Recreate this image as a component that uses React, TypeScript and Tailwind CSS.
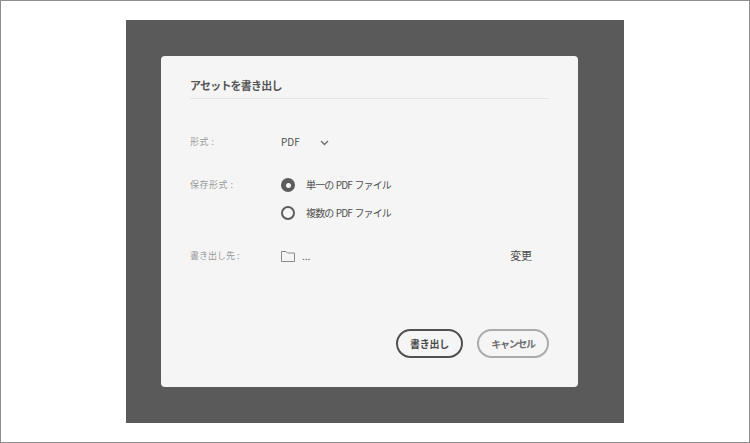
import React from "react";

function Radio({ on, label }: { on?: boolean; label: string }) {
  return (
    <div className="flex h-[14px] items-center">
      <span className={on ? "flex h-[14px] w-[14px] items-center justify-center rounded-full bg-[#5c5c5c]" : "h-[14px] w-[14px] rounded-full border-2 border-[#5c5c5c]"}>
        {on && <span className="h-[5px] w-[5px] rounded-full bg-[#f5f5f5]" />}
      </span>
      <span className="ml-[11px] text-[10px] leading-[14px] tracking-[-0.85px] text-[#505050] [word-spacing:1px]">{label}</span>
    </div>
  );
}

export default function App() {
  return (
    <div className="flex h-[443px] w-[750px] items-start justify-center border border-[#8e8e8e] bg-white pt-[19px] font-['Noto_Sans_CJK_JP','Noto_Sans',sans-serif]">
      <div className="flex h-[403px] w-[498px] items-start justify-start bg-[#5a5a5a] pl-[35px] pt-[36px]">
        <div className="flex h-[331px] w-[417px] flex-col rounded-[4px] bg-[#f5f5f5] pl-[29px] pr-[29px]">
          <div className="h-[43px] border-b border-[#e4e4e4] pt-[20px] text-[11px] font-bold leading-[18px] tracking-[-0.8px] text-[#555555]">アセットを書き出し</div>

          <div className="mt-[35px] flex h-[16px] items-center">
            <span className="w-[91px] text-[9px] leading-[16px] tracking-[0.5px] text-[#9a9a9a]">形式 :</span>
            <span className="text-[10px] leading-[16px] text-[#505050]">PDF</span>
            <svg className="ml-[20px] mt-[1px]" width="9" height="6" viewBox="0 0 9 6" fill="none" stroke="#707070" strokeWidth="1.4"><path d="M1 1l3.5 3.5L8 1" /></svg>
          </div>

          <div className="mt-[28px] flex">
            <span className="w-[91px] text-[9px] leading-[14px] tracking-[0.5px] text-[#9a9a9a]">保存形式 :</span>
            <div className="flex flex-col gap-[14px]">
              <Radio on label="単一の PDF ファイル" />
              <Radio label="複数の PDF ファイル" />
            </div>
          </div>

          <div className="mt-[28px] flex h-[16px] items-center">
            <span className="w-[91px] text-[9px] leading-[16px] text-[#9a9a9a]">書き出し先 :</span>
            <svg width="14" height="11" viewBox="0 0 14 11" fill="none" stroke="#8a8a8a" strokeWidth="1"><path d="M.5 10.5V.5h4.5l1.5 1.5h7v8.5z" /></svg>
            <span className="ml-[7px] text-[10px] leading-[16px] text-[#505050]">...</span>
            <span className="mb-[2px] ml-auto mr-[17px] text-[11px] leading-[16px] tracking-[-0.1px] text-[#4b4b4b]">変更</span>
          </div>

          <div className="mb-[29px] mt-auto flex justify-end gap-[14px]">
            <button className="h-[29px] w-[67px] rounded-full border-2 border-[#505050] text-[10px] font-bold tracking-[-0.2px] text-[#4b4b4b]">書き出し</button>
            <button className="h-[29px] w-[72px] rounded-full border-2 border-[#ababab] text-[10px] font-bold tracking-[-1.3px] text-[#6e6e6e]">キャンセル</button>
          </div>
        </div>
      </div>
    </div>
  );
}
